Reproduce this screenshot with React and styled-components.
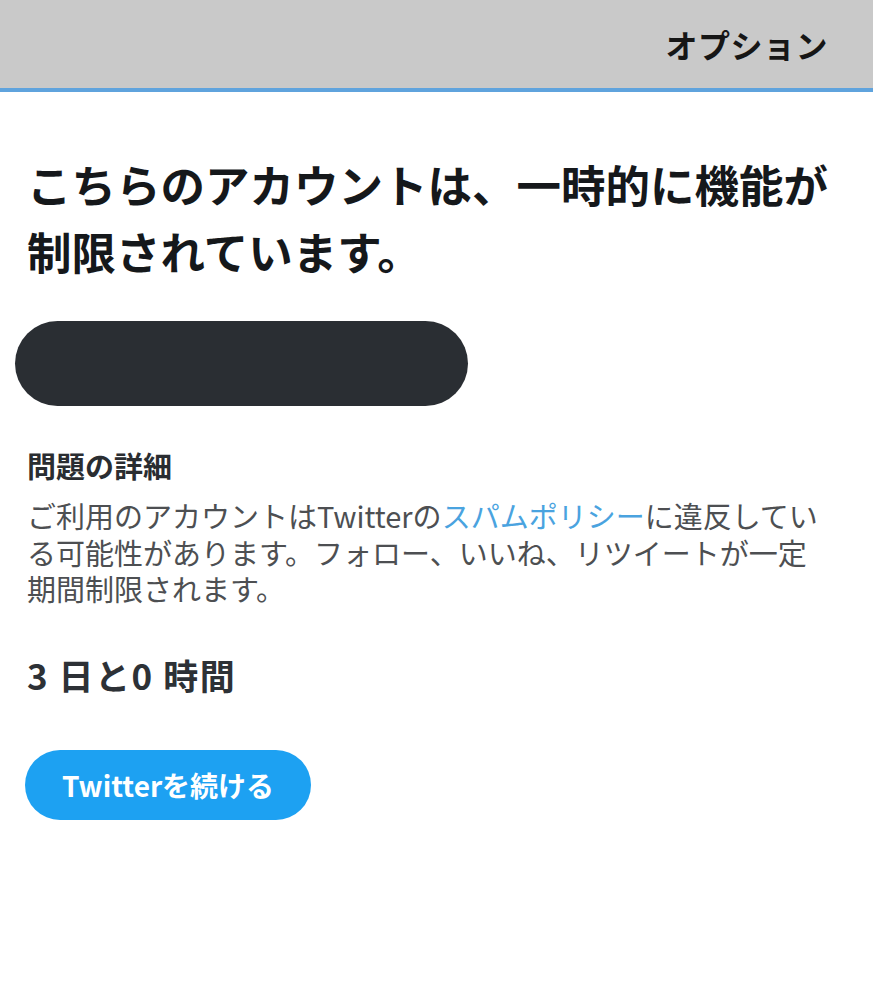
import React from "react";
import styled, { createGlobalStyle } from "styled-components";

const GlobalStyle = createGlobalStyle`
  html, body {
    margin: 0;
    padding: 0;
    background: #ffffff;
  }
  body {
    font-family: "Noto Sans CJK JP", "Noto Sans", sans-serif;
  }
`;

const Page = styled.div`
  width: 873px;
  min-height: 999px;
  background: #ffffff;
`;

const Header = styled.header`
  height: 88px;
  background: #c9c9c9;
  border-bottom: 4px solid #5fa3dd;
  display: flex;
  align-items: center;
  justify-content: flex-end;
  padding-right: 45px;
`;

const HeaderLink = styled.span`
  font-size: 32px;
  font-weight: 700;
  color: #161616;
  letter-spacing: 0.5px;
`;

const Content = styled.main`
  padding: 58px 28px 0 27px;
  display: flex;
  flex-direction: column;
  align-items: flex-start;
`;

const Title = styled.h1`
  margin: 0;
  font-size: 44.5px;
  line-height: 67px;
  font-weight: 700;
  color: #15181b;
`;

const Redacted = styled.div`
  margin: 37px 0 0 -12px;
  width: 453px;
  height: 85px;
  border-radius: 43px;
  background: #2a2e33;
`;

const SectionLabel = styled.h2`
  margin: 41px 0 0;
  font-size: 29px;
  line-height: 37px;
  font-weight: 700;
  color: #2a2d31;
`;

const Body = styled.p`
  margin: 13px 0 0;
  max-width: 796px;
  font-size: 29px;
  line-height: 36.5px;
  font-weight: 400;
  color: #4d4f52;
`;

const Link = styled.a`
  color: #4aa3df;
  text-decoration: none;
`;

const Countdown = styled.div`
  margin-top: 46px;
  font-size: 35px;
  line-height: 44px;
  font-weight: 700;
  letter-spacing: 1.5px;
  color: #2d3136;
`;

const PrimaryButton = styled.button`
  margin-top: 53px;
  margin-left: -2px;
  width: 286px;
  height: 70px;
  border: none;
  border-radius: 35px;
  background: #1da1f2;
  color: #ffffff;
  font-family: inherit;
  font-size: 28px;
  font-weight: 700;
  cursor: pointer;
`;

export default function App() {
  return (
    <>
      <GlobalStyle />
      <Page>
        <Header>
          <HeaderLink>オプション</HeaderLink>
        </Header>
        <Content>
          <Title>
            こちらのアカウントは、一時的に機能が
            <br />
            制限されています。
          </Title>
          <Redacted />
          <SectionLabel>問題の詳細</SectionLabel>
          <Body>
            ご利用のアカウントはTwitterの<Link href="#">スパムポリシー</Link>
            に違反している可能性があります。フォロー、いいね、リツイートが一定期間制限されます。
          </Body>
          <Countdown>3 日と0 時間</Countdown>
          <PrimaryButton>Twitterを続ける</PrimaryButton>
        </Content>
      </Page>
    </>
  );
}
